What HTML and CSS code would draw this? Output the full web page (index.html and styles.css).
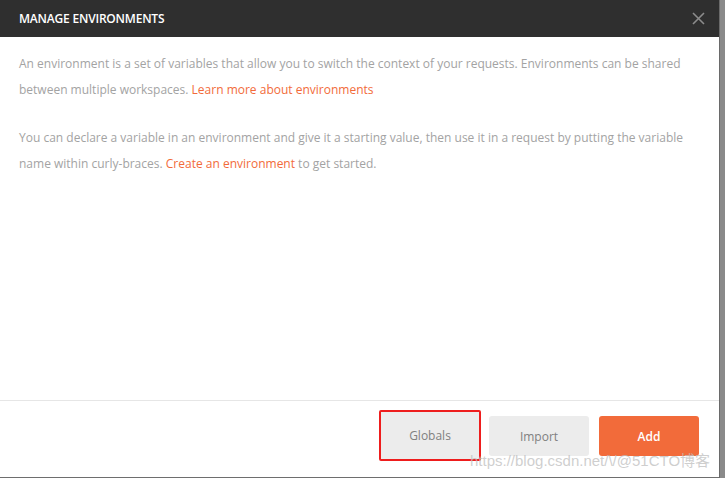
FILE: index.html
```html
<!DOCTYPE html>
<html>
<head>
<meta charset="utf-8">
<link rel="stylesheet" href="styles.css">
</head>
<body>
<div class="screen">
  <div class="modal">
    <div class="header">
      <span class="title">MANAGE ENVIRONMENTS</span>
      <svg class="close" width="13" height="13" viewBox="0 0 13 13"><path d="M1 1L12 12M12 1L1 12" stroke="#8c8c8c" stroke-width="1.6" fill="none"/></svg>
    </div>
    <div class="body">
      <p class="para">An environment is a set of variables that allow you to switch the context of your requests. Environments can be shared between multiple workspaces. <a class="link">Learn more about environments</a></p>
      <p class="para second">You can declare a variable in an environment and give it a starting value, then use it in a request by putting the variable name within curly-braces. <a class="link">Create an environment</a> to get started.</p>
    </div>
    <div class="footer">
      <div class="btn-wrap marked"><button class="btn gray">Globals</button></div>
      <button class="btn gray">Import</button>
      <button class="btn orange">Add</button>
      <span class="watermark">https://blog.csdn.net/\/@51CTO博客</span>
    </div>
  </div>
  <div class="side"></div>
</div>
</body>
</html>
```
FILE: styles.css
```css
*, *::before, *::after {
  box-sizing: border-box;
}
html, body {
  margin: 0;
  padding: 0;
  width: 725px;
  height: 478px;
  overflow: hidden;
  font-family: "Open Sans", "Noto Sans CJK SC", sans-serif;
}
.screen {
  display: flex;
  width: 725px;
  height: 478px;
  background: #6e6e6e;
}
.modal {
  width: 719px;
  height: 477px;
  background: #ffffff;
  display: flex;
  flex-direction: column;
}
.side {
  flex: 1;
  background: #8a8a8a;
  border-left: 1px solid #6a6a6a;
}
.header {
  height: 37px;
  flex-shrink: 0;
  background: #2f2f2f;
  display: flex;
  align-items: center;
  justify-content: space-between;
  padding: 0 14px 0 19px;
}
.title {
  color: #ffffff;
  font-size: 12px;
  font-weight: 600;
  letter-spacing: -0.2px;
}
.close {
  display: block;
}
.body {
  flex: 1;
  padding: 14px 19px 0 19px;
}
.para {
  margin: 0;
  font-size: 12px;
  line-height: 26px;
  color: #a3a3a3;
}
.para.second {
  margin-top: 22px;
}
.link {
  color: #f26b3a;
}
.footer {
  position: relative;
  height: 77px;
  flex-shrink: 0;
  border-top: 1px solid #e6e6e6;
  display: flex;
  justify-content: flex-end;
  align-items: flex-start;
  padding: 15px 20px 0 0;
  gap: 10px;
}
.btn {
  width: 100px;
  height: 40px;
  border: none;
  border-radius: 3px;
  font-family: "Open Sans", sans-serif;
  font-size: 12px;
  font-weight: 400;
  padding: 0;
}
.btn.gray {
  background: #ececec;
  color: #808080;
}
.btn.orange {
  background: #f26b3a;
  color: #ffffff;
  font-weight: 600;
}
.btn-wrap.marked {
  margin-top: -6px;
  margin-right: -2px;
  width: 102px;
  height: 51px;
  border: 2px solid #ee1d1d;
  border-radius: 2px;
  background: #ececec;
  display: flex;
  align-items: center;
  justify-content: center;
}
.btn-wrap .btn {
  height: 40px;
  width: 98px;
}
.watermark {
  position: absolute;
  left: 470px;
  top: 48px;
  font-family: "Liberation Sans", "Noto Sans CJK SC", sans-serif;
  font-size: 15px;
  color: rgba(190, 190, 190, 0.75);
  white-space: nowrap;
  pointer-events: none;
}
```
